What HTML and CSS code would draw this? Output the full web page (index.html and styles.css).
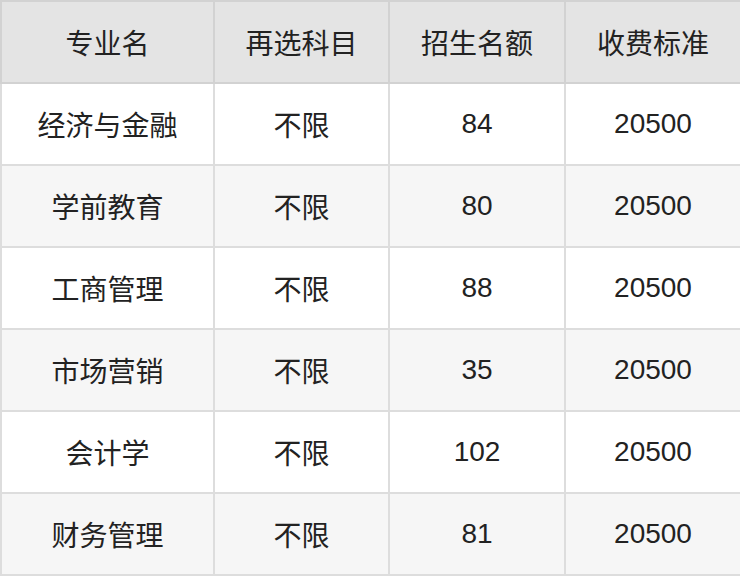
FILE: index.html
```html
<!DOCTYPE html>
<html lang="zh">
<head>
<meta charset="utf-8">
<link rel="stylesheet" href="styles.css">
</head>
<body>
<table class="tbl">
  <colgroup>
    <col class="c1"><col class="c2"><col class="c3"><col class="c4">
  </colgroup>
  <thead>
    <tr><th>专业名</th><th>再选科目</th><th>招生名额</th><th>收费标准</th></tr>
  </thead>
  <tbody>
    <tr><td>经济与金融</td><td>不限</td><td>84</td><td>20500</td></tr>
    <tr><td>学前教育</td><td>不限</td><td>80</td><td>20500</td></tr>
    <tr><td>工商管理</td><td>不限</td><td>88</td><td>20500</td></tr>
    <tr><td>市场营销</td><td>不限</td><td>35</td><td>20500</td></tr>
    <tr><td>会计学</td><td>不限</td><td>102</td><td>20500</td></tr>
    <tr><td>财务管理</td><td>不限</td><td>81</td><td>20500</td></tr>
  </tbody>
</table>
</body>
</html>
```
FILE: styles.css
```css
html, body {
  margin: 0;
  padding: 0;
  background: #fff;
}
.tbl {
  width: 740px;
  border-collapse: collapse;
  table-layout: fixed;
  font-family: "Liberation Sans", "Noto Sans CJK SC", sans-serif;
  font-size: 28px;
  color: #222;
}
.c1 { width: 213px; }
.c2 { width: 175px; }
.c3 { width: 176px; }
.c4 { width: 176px; }
.tbl th, .tbl td {
  border: 2px solid #dddddd;
  height: 82px;
  padding: 0;
  text-align: center;
  vertical-align: middle;
  font-weight: normal;
  box-sizing: border-box;
}
.tbl th {
  background: #e4e4e4;
  border-color: #d2d2d2;
}
.tbl tbody tr:nth-child(even) td {
  background: #f6f6f6;
}
```
